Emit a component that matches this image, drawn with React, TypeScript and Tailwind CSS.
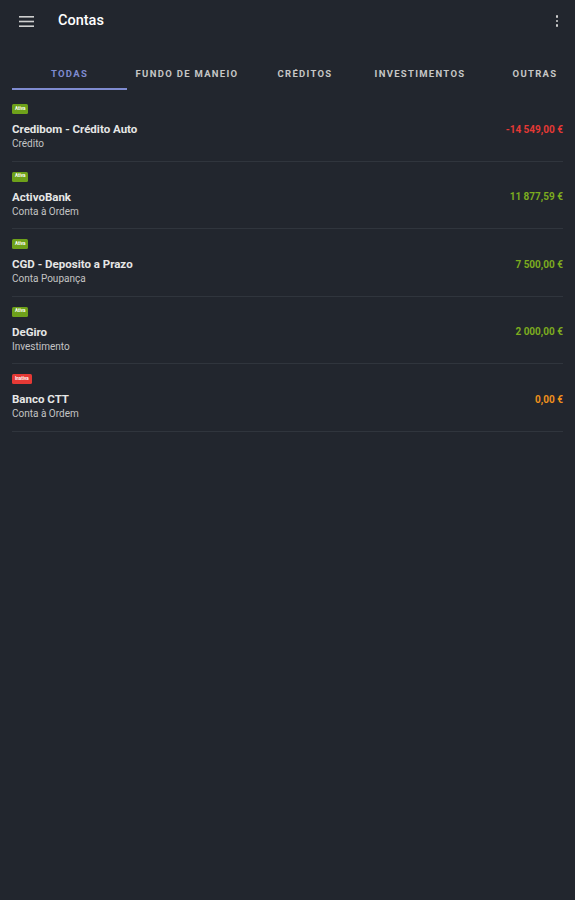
import { useState } from "react";

const tabs = [
  { label: "TODAS", w: "w-[115px]" },
  { label: "FUNDO DE MANEIO", w: "w-[120px]" },
  { label: "CRÉDITOS", w: "w-[116px]" },
  { label: "INVESTIMENTOS", w: "w-[114px]" },
  { label: "OUTRAS", w: "w-[116px]" },
];

const accounts = [
  { name: "Credibom - Crédito Auto", type: "Crédito", amount: "-14 549,00 €", tone: "neg", active: true },
  { name: "ActivoBank", type: "Conta à Ordem", amount: "11 877,59 €", tone: "pos", active: true },
  { name: "CGD - Deposito a Prazo", type: "Conta Poupança", amount: "7 500,00 €", tone: "pos", active: true },
  { name: "DeGiro", type: "Investimento", amount: "2 000,00 €", tone: "pos", active: true },
  { name: "Banco CTT", type: "Conta à Ordem", amount: "0,00 €", tone: "zero", active: false },
];

const toneClass: Record<string, string> = {
  neg: "text-[#e53935]",
  pos: "text-[#7cab1f]",
  zero: "text-[#f0901c]",
};

export default function App() {
  const [tab, setTab] = useState(0);

  return (
    <div className="min-h-[900px] w-full overflow-hidden bg-[#22262e] font-['Roboto',sans-serif] text-[#e4e4e4]">
      {/* top bar */}
      <div className="flex h-[42px] items-center pl-[19px] pr-[17px]">
        <svg width="15" height="11" viewBox="0 0 15 11" className="text-[#cfcfcf]">
          <rect x="0" y="0" width="15" height="1.6" fill="currentColor" />
          <rect x="0" y="4.7" width="15" height="1.6" fill="currentColor" />
          <rect x="0" y="9.4" width="15" height="1.6" fill="currentColor" />
        </svg>
        <span className="ml-[24px] text-[14.5px] font-medium text-white">Contas</span>
        <div className="ml-auto flex flex-col gap-[2px]">
          <span className="h-[2.5px] w-[2.5px] rounded-full bg-[#cfcfcf]" />
          <span className="h-[2.5px] w-[2.5px] rounded-full bg-[#cfcfcf]" />
          <span className="h-[2.5px] w-[2.5px] rounded-full bg-[#cfcfcf]" />
        </div>
      </div>

      {/* tabs */}
      <div className="mt-[13px] flex whitespace-nowrap px-[12px]">
        {tabs.map((t, i) => (
          <button
            key={t.label}
            onClick={() => setTab(i)}
            className={
              "flex h-[35px] shrink-0 flex-col items-center justify-between pt-[12px] text-[9.5px] font-bold tracking-[1.3px] " +
              t.w +
              " " +
              (tab === i ? "text-[#7f8bd0]" : "text-[#c6c6c6]")
            }
          >
            <span>{t.label}</span>
            <span className={"h-[2px] w-full " + (tab === i ? "bg-[#7f8bd0]" : "bg-transparent")} />
          </button>
        ))}
      </div>

      {/* list */}
      <div className="mt-[4px] px-[12px]">
        {accounts.map((a) => (
          <div key={a.name} className="border-b border-[#30353d] pb-[10.5px] pt-[10px]">
            <div
              className={
                "flex h-[10px] w-fit items-center rounded-[1.5px] px-[3px] text-[4.5px] font-bold text-white " +
                (a.active ? "bg-[#6ea11a]" : "bg-[#e53935]")
              }
            >
              {a.active ? "Ativa" : "Inativa"}
            </div>
            <div className="mt-[7px] flex items-center justify-between">
              <span className="text-[11.5px] font-bold leading-[16px] text-[#e6e6e6]">{a.name}</span>
              <span className={"text-[10px] font-bold " + toneClass[a.tone]}>{a.amount}</span>
            </div>
            <div className="text-[10px] leading-[13px] text-[#c4c4c4]">{a.type}</div>
          </div>
        ))}
      </div>
    </div>
  );
}
